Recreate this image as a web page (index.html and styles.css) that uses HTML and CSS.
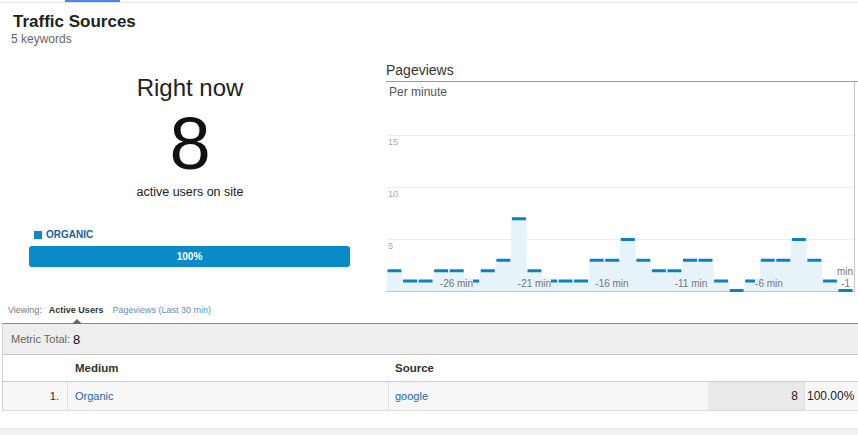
FILE: index.html
```html
<!DOCTYPE html>
<html>
<head>
<meta charset="utf-8">
<title>Traffic Sources</title>
<link rel="stylesheet" href="styles.css">
</head>
<body>
<div class="topbar"><span class="tab"></span></div>
<header class="head">
  <h1 class="title">Traffic Sources</h1>
  <div class="sub">5 keywords</div>
</header>
<section class="main">
  <div class="now">
    <div class="now-label">Right now</div>
    <div class="now-num">8</div>
    <div class="now-sub">active users on site</div>
    <div class="legend"><span class="swatch"></span>ORGANIC</div>
    <div class="bar">100%</div>
  </div>
  <div class="pv">
    <div class="pv-title">Pageviews</div>
    <svg class="chart" width="472" height="215" viewBox="0 0 472 215">
      <text class="per" x="3" y="13.7">Per minute</text>
      <g class="grid">
        <line x1="0" y1="53.5" x2="468" y2="53.5"/>
        <line x1="0" y1="105.5" x2="468" y2="105.5"/>
        <line x1="0" y1="157.5" x2="468" y2="157.5"/>
      </g>
      <text class="ytick" x="2" y="63">15</text>
      <text class="ytick" x="2" y="115">10</text>
      <text class="ytick" x="2" y="167">5</text>
      <path class="area" d="M0.7,209.5 V188.7 H16.25 V199.1 H47.36 V188.7 H78.47 V199.1 H94.02 V188.7 H109.57 V178.3 H125.12 V136.7 H140.68 V188.7 H156.23 V199.1 H202.89 V178.3 H234 V157.5 H249.55 V178.3 H265.1 V188.7 H296.21 V178.3 H327.31 V199.1 H342.87 V209.5 H358.42 V199.1 H373.97 V178.3 H405.08 V157.5 H420.63 V178.3 H436.18 V199.1 H451.74 V209.5 H467.3 Z"/>
      <line class="axis" x1="0" y1="209.5" x2="468" y2="209.5"/>
      <path class="steps" d="M1.5,188.7H15.4 M17.1,199.1H31 M32.6,199.1H46.6 M48.2,188.7H62.1 M63.7,188.7H77.7 M79.3,199.1H93.2 M94.8,188.7H108.8 M110.4,178.3H124.3 M125.9,136.7H139.9 M141.5,188.7H155.4 M157,199.1H171 M172.6,199.1H186.5 M188.1,199.1H202.1 M203.7,178.3H217.6 M219.2,178.3H233.2 M234.8,157.5H248.8 M250.4,178.3H264.3 M265.9,188.7H279.9 M281.5,188.7H295.4 M297,178.3H311 M312.6,178.3H326.5 M328.1,199.1H342.1 M343.7,208.5H357.6 M359.2,199.1H373.2 M374.8,178.3H388.7 M390.3,178.3H404.3 M405.9,157.5H419.8 M421.4,178.3H435.4 M437,199.1H450.9 M452.5,208.5H466.5"/>
      <g class="xlab">
        <rect x="54" y="196" width="33" height="11"/>
        <text x="70.5" y="204.5">-26 min</text>
        <rect x="132" y="196" width="33" height="11"/>
        <text x="148.5" y="204.5">-21 min</text>
        <rect x="209.5" y="196" width="33" height="11"/>
        <text x="226" y="204.5">-16 min</text>
        <rect x="288.5" y="196" width="33" height="11"/>
        <text x="305" y="204.5">-11 min</text>
        <rect x="369" y="196" width="28" height="11"/>
        <text x="383" y="204.5">-6 min</text>
        <text x="459.5" y="204.5">-1</text>
        <text class="end" x="467" y="192.5">min</text>
      </g>
      <line class="rborder" x1="468.5" y1="0" x2="468.5" y2="210"/>
    </svg>
  </div>
</section>
<div class="viewing">
  <span class="v-label">Viewing:</span>
  <span class="v-active">Active Users</span>
  <span class="v-alt">Pageviews (Last 30 min)</span>
</div>
<section class="table">
  <div class="metric"><span class="m-label">Metric Total:</span><span class="m-val">8</span></div>
  <div class="row hdr">
    <div class="c c1"></div>
    <div class="c c2">Medium</div>
    <div class="c c3">Source</div>
  </div>
  <div class="row data">
    <div class="c c1 idx">1.</div>
    <div class="c c2 sep"><span class="link">Organic</span></div>
    <div class="c c3 sep"><span class="link">google</span></div>
    <div class="c c4 num">8</div>
    <div class="c c5 pct">100.00%</div>
  </div>
</section>
<div class="foot"></div>
</body>
</html>
```

FILE: styles.css
```css
html, body {
  margin: 0;
  padding: 0;
  background: #fff;
  overflow: hidden;
}
body {
  width: 858px;
  height: 435px;
  font-family: "Liberation Sans", Arial, sans-serif;
  color: #222;
}

.topbar {
  height: 2px;
  border-bottom: 1px solid #e3e3e3;
}
.tab {
  display: block;
  margin-left: 65px;
  width: 55px;
  height: 2px;
  background: #4a86e8;
}

.head {
  padding: 9px 0 0 13px;
}
.title {
  margin: 0;
  font-size: 17px;
  line-height: 20px;
  font-weight: bold;
  color: #222;
}
.sub {
  margin-left: -2px;
  font-size: 12px;
  line-height: 14px;
  color: #666;
}

.main {
  display: flex;
  height: 251px;
}
.now {
  width: 380px;
  padding-top: 28px;
  text-align: center;
}
.now-label {
  font-size: 24px;
  line-height: 28px;
  color: #222;
}
.now-num {
  margin-top: 8px;
  font-size: 74px;
  line-height: 68px;
  color: #111;
}
.now-sub {
  margin-top: 6px;
  font-size: 12.5px;
  line-height: 16px;
  color: #222;
}
.legend {
  display: flex;
  align-items: center;
  margin: 29px 0 0 34px;
  font-size: 10px;
  line-height: 12px;
  font-weight: bold;
  color: #1b5e9b;
  text-align: left;
}
.swatch {
  width: 8px;
  height: 8px;
  margin-right: 4px;
  background: #0a8bc9;
}
.bar {
  margin: 5px 0 0 29px;
  width: 321px;
  height: 21px;
  line-height: 21px;
  border-radius: 3px;
  background: #0a8bc9;
  color: #fff;
  font-size: 10px;
  font-weight: bold;
}

.pv {
  margin-left: 6px;
  width: 472px;
  padding-top: 16px;
}
.pv-title {
  height: 19px;
  font-size: 14px;
  line-height: 16px;
  color: #333;
  border-bottom: 1px solid #9a9a9a;
}
.chart {
  display: block;
  font-family: "Liberation Sans", Arial, sans-serif;
}
.per {
  font-size: 12px;
  fill: #555;
}
.grid line {
  stroke: #ececec;
  stroke-width: 1;
}
.ytick {
  font-size: 9px;
  fill: #aaa;
}
.area {
  fill: #e6f3fa;
}
.axis {
  stroke: #c4c4c4;
  stroke-width: 1;
}
.steps {
  fill: none;
  stroke: #0b80c3;
  stroke-width: 3;
}
.xlab rect {
  fill: #e6f3fa;
}
.xlab text {
  font-size: 10px;
  fill: #777;
  text-anchor: middle;
}
.xlab text.end {
  text-anchor: end;
}
.rborder {
  stroke: #c8c8c8;
  stroke-width: 1;
}

.viewing {
  display: flex;
  margin: 7px 0 0 8px;
  height: 12px;
  font-size: 9px;
  line-height: 12px;
}
.v-label {
  color: #777;
}
.v-active {
  position: relative;
  margin-left: 7px;
  font-weight: bold;
  color: #333;
}
.v-active::after {
  content: "";
  position: absolute;
  left: 23px;
  top: 15px;
  border-left: 5px solid transparent;
  border-right: 5px solid transparent;
  border-bottom: 5px solid #666;
}
.v-alt {
  margin-left: 9px;
  color: #5b8fc7;
}

.table {
  margin: 7px 0 0 2px;
  border-top: 1px solid #8a8a8a;
  border-left: 1px solid #cfcfcf;
}
.metric {
  display: flex;
  align-items: center;
  height: 30px;
  padding-left: 8px;
  background: #eee;
  border-bottom: 1px solid #c6c6c6;
}
.m-label {
  font-size: 11px;
  color: #666;
}
.m-val {
  margin-left: 3px;
  font-size: 13px;
  color: #111;
}
.row {
  display: grid;
  grid-template-columns: 64px 321px 320px 96px 1fr;
}
.hdr {
  height: 26px;
  border-bottom: 1px solid #cdcdcd;
  font-size: 11.5px;
  font-weight: bold;
  color: #333;
}
.data {
  height: 28px;
  background: #f7f7f7;
  border-bottom: 1px solid #dcdcdc;
  font-size: 11px;
}
.c {
  display: flex;
  align-items: center;
  padding-left: 8px;
}
.hdr .c3 {
  grid-column: 3 / 6;
}
.idx {
  justify-content: flex-end;
  padding: 0 8px 0 0;
  color: #333;
}
.sep {
  border-left: 1px solid #e0e0e0;
  padding-left: 7px;
}
.c3.sep {
  padding-left: 6px;
}
.hdr .c3 {
  padding-left: 7px;
}
.link {
  color: #2b66a8;
}
.num {
  justify-content: flex-end;
  padding: 0 6px 0 0;
  background: #e9e9e9;
  font-size: 12px;
  color: #222;
}
.pct {
  border-left: 1px solid #dedede;
  padding-left: 2px;
  font-size: 12px;
  color: #222;
}

.foot {
  margin-top: 17px;
  height: 10px;
  background: #f2f2f2;
  border-top: 1px solid #e6e6e6;
}
```
